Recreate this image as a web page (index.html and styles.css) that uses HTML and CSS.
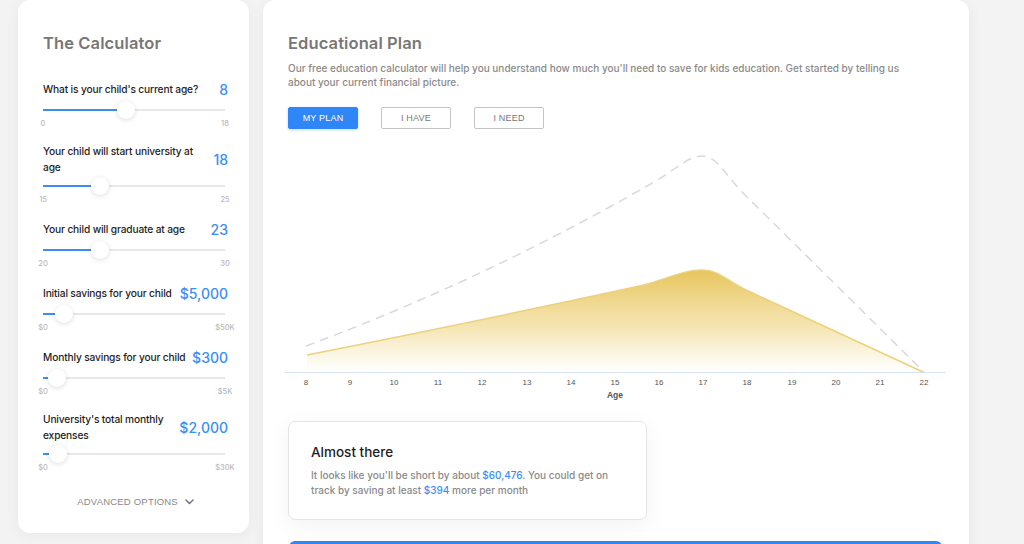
FILE: index.html
```html
<!DOCTYPE html>
<html>
<head>
<meta charset="utf-8">
<link rel="stylesheet" href="styles.css">
</head>
<body>
<div class="page">
  <aside class="calc">
    <h2 class="card-title">The Calculator</h2>

    <div class="field">
      <div class="field-head"><span class="label">What is your child's current age?</span><span class="value">8</span></div>
      <div class="slider"><div class="fill" style="width:45.6%"></div><div class="thumb" style="left:45.6%"></div></div>
      <div class="range"><span>0</span><span>18</span></div>
    </div>

    <div class="field">
      <div class="field-head"><span class="label w-start">Your child will start university at age</span><span class="value">18</span></div>
      <div class="slider"><div class="fill" style="width:31.3%"></div><div class="thumb" style="left:31.3%"></div></div>
      <div class="range"><span>15</span><span>25</span></div>
    </div>

    <div class="field">
      <div class="field-head"><span class="label">Your child will graduate at age</span><span class="value">23</span></div>
      <div class="slider"><div class="fill" style="width:31.3%"></div><div class="thumb" style="left:31.3%"></div></div>
      <div class="range"><span>20</span><span>30</span></div>
    </div>

    <div class="field">
      <div class="field-head"><span class="label">Initial savings for your child</span><span class="value">$5,000</span></div>
      <div class="slider"><div class="fill" style="width:11.5%"></div><div class="thumb" style="left:11.5%"></div></div>
      <div class="range"><span>$0</span><span>$50K</span></div>
    </div>

    <div class="field">
      <div class="field-head"><span class="label">Monthly savings for your child</span><span class="value">$300</span></div>
      <div class="slider"><div class="fill" style="width:7.7%"></div><div class="thumb" style="left:7.7%"></div></div>
      <div class="range"><span>$0</span><span>$5K</span></div>
    </div>

    <div class="field">
      <div class="field-head"><span class="label w-univ">University's total monthly expenses</span><span class="value">$2,000</span></div>
      <div class="slider"><div class="fill" style="width:8.2%"></div><div class="thumb" style="left:8.2%"></div></div>
      <div class="range"><span>$0</span><span>$30K</span></div>
    </div>

    <div class="advanced">ADVANCED OPTIONS
      <svg class="chev" width="9" height="6" viewBox="0 0 9 6"><path d="M1 1l3.5 3.5L8 1" fill="none" stroke="#777" stroke-width="1.5" stroke-linecap="round" stroke-linejoin="round"/></svg>
    </div>
  </aside>

  <main class="plan">
    <h2 class="card-title">Educational Plan</h2>
    <p class="desc">Our free education calculator will help you understand how much you'll need to save for kids education. Get started by telling us about your current financial picture.</p>
    <div class="tabs">
      <button class="tab active">MY PLAN</button>
      <button class="tab">I HAVE</button>
      <button class="tab">I NEED</button>
    </div>

    <svg class="chart" width="662" height="262" viewBox="0 0 662 262">
      <defs>
        <linearGradient id="gold" x1="0" y1="0" x2="0" y2="1">
          <stop offset="0" stop-color="#e6c253" stop-opacity="0.95"/>
          <stop offset="0.55" stop-color="#f0d98e" stop-opacity="0.7"/>
          <stop offset="1" stop-color="#ffffff" stop-opacity="0.6"/>
        </linearGradient>
      </defs>
      <path d="M23,215 Q200,180 360,145 C385,138 400,130 418,130 C435,130 445,142 460,149 L639,232 L23,232 Z" fill="url(#gold)"/>
      <path d="M23,215 Q200,180 360,145 C385,138 400,130 418,130 C435,130 445,142 460,149 L639,232" fill="none" stroke="#ecd17c" stroke-width="1.5"/>
      <path d="M22,206 Q200,140 370,42 C395,27 405,16 418,16 C432,16 440,32 456,50 L640,232" fill="none" stroke="#d9d9d9" stroke-width="1.5" stroke-dasharray="9 6"/>
      <line x1="0" y1="232.5" x2="662" y2="232.5" stroke="#dbe4f6" stroke-width="1"/>
      <g class="ticks" font-family="'Liberation Sans', Arial, sans-serif" font-size="8" fill="#555" text-anchor="middle">
        <text x="22" y="245">8</text>
        <text x="66" y="245">9</text>
        <text x="110" y="245">10</text>
        <text x="154" y="245">11</text>
        <text x="198" y="245">12</text>
        <text x="243" y="245">13</text>
        <text x="287" y="245">14</text>
        <text x="331" y="245">15</text>
        <text x="375" y="245">16</text>
        <text x="419" y="245">17</text>
        <text x="463" y="245">18</text>
        <text x="508" y="245">19</text>
        <text x="552" y="245">20</text>
        <text x="596" y="245">21</text>
        <text x="640" y="245">22</text>
        <text x="331" y="258" font-weight="bold" font-size="8.5">Age</text>
      </g>
    </svg>

    <div class="result">
      <h3>Almost there</h3>
      <p>It looks like you'll be short by about <span class="hl">$60,476</span>. You could get on track by saving at least <span class="hl">$394</span> more per month</p>
    </div>

    <div class="cta"></div>
  </main>
</div>
</body>
</html>
```

FILE: styles.css
```css
* { box-sizing: border-box; }
html, body { margin: 0; padding: 0; }
body {
  background: #f3f3f3;
  font-family: Inter, "Noto Sans", sans-serif;
  width: 1024px;
  height: 544px;
  overflow: hidden;
}
.page {
  display: flex;
  align-items: flex-start;
  gap: 14px;
  padding-left: 18px;
}
.calc {
  width: 231px;
  height: 533px;
  background: #fff;
  border-radius: 12px;
  box-shadow: 0 2px 14px rgba(0,0,0,0.05);
  padding: 31px 21px 0 25px;
}
.card-title {
  margin: 0;
  font-size: 16.5px;
  font-weight: 600;
  color: #777;
  letter-spacing: 0.1px;
  line-height: 24px;
}
.calc .card-title { margin-bottom: 24px; }
.field { margin-bottom: 15px; }
.field-head {
  display: flex;
  align-items: center;
  justify-content: space-between;
  gap: 6px;
  min-height: 20px;
}
.label {
  flex: 1;
  font-size: 10.2px;
  font-weight: 500;
  letter-spacing: -0.15px;
  color: #1e1e1e;
  line-height: 16px;
}
.label.w-start { max-width: 160px; }
.label.w-univ { max-width: 130px; }
.value {
  flex: none;
  font-size: 14px;
  font-weight: 500;
  color: #3a8ef6;
}
.slider {
  position: relative;
  height: 2px;
  background: #e8e8e8;
  margin: 10px 0 0 0;
  width: 182px;
}
.fill {
  height: 2px;
  background: #3a8ef6;
}
.thumb {
  position: absolute;
  top: -8px;
  width: 18px;
  height: 18px;
  margin-left: -9px;
  border-radius: 50%;
  background: #fff;
  box-shadow: 0 1px 5px rgba(0,0,0,0.14);
}
.range {
  display: flex;
  justify-content: space-between;
  font-size: 7.5px;
  line-height: 9px;
  color: #b9b9b9;
  margin-top: 8px;
  width: 182px;
  font-weight: 500;
}
.range span {
  width: 0;
  display: flex;
  justify-content: center;
  white-space: nowrap;
}
.advanced {
  margin-top: 24px;
  text-align: center;
  font-family: "Liberation Sans", Arial, sans-serif;
  font-size: 9.5px;
  line-height: 11px;
  color: #888;
  letter-spacing: 0.2px;
}
.chev { margin-left: 4px; vertical-align: middle; }

.plan {
  width: 706px;
  height: 560px;
  background: #fff;
  border-radius: 12px;
  box-shadow: 0 2px 14px rgba(0,0,0,0.05);
  padding: 31px 25px 0 25px;
}
.desc {
  margin: 6px 0 0 0;
  font-size: 10px;
  line-height: 14px;
  font-weight: 500;
  color: #8a8a8a;
  width: 640px;
}
.tabs {
  display: flex;
  gap: 23px;
  margin-top: 18px;
}
.tab {
  width: 70px;
  height: 22px;
  border: 1px solid #c4c4c4;
  border-radius: 2px;
  background: #fff;
  color: #777;
  font-family: "Liberation Sans", Arial, sans-serif;
  font-size: 9px;
  letter-spacing: 0.2px;
  padding: 0;
}
.tab.active {
  background: #2f86f6;
  border-color: #2f86f6;
  color: #fff;
  box-shadow: 0 1px 3px rgba(47,134,246,0.3);
}
.chart {
  display: block;
  margin: 11px 0 0 -4px;
}
.result {
  width: 359px;
  height: 99px;
  margin-top: 19px;
  border: 1px solid #e4e4e4;
  border-radius: 7px;
  box-shadow: 0 6px 24px rgba(0,0,0,0.05);
  padding: 21px 22px 0 22px;
}
.result h3 {
  margin: 0;
  font-size: 13.5px;
  font-weight: 500;
  color: #1e1e1e;
  line-height: 18px;
}
.result p {
  margin: 7px 0 0 0;
  font-size: 10px;
  line-height: 15px;
  color: #8a8a8a;
  font-weight: 500;
}
.hl { color: #3a8ef6; }
.cta {
  width: 653px;
  height: 24px;
  margin-top: 21px;
  margin-left: 1px;
  background: #2f86f6;
  border-radius: 6px 6px 0 0;
}
```
